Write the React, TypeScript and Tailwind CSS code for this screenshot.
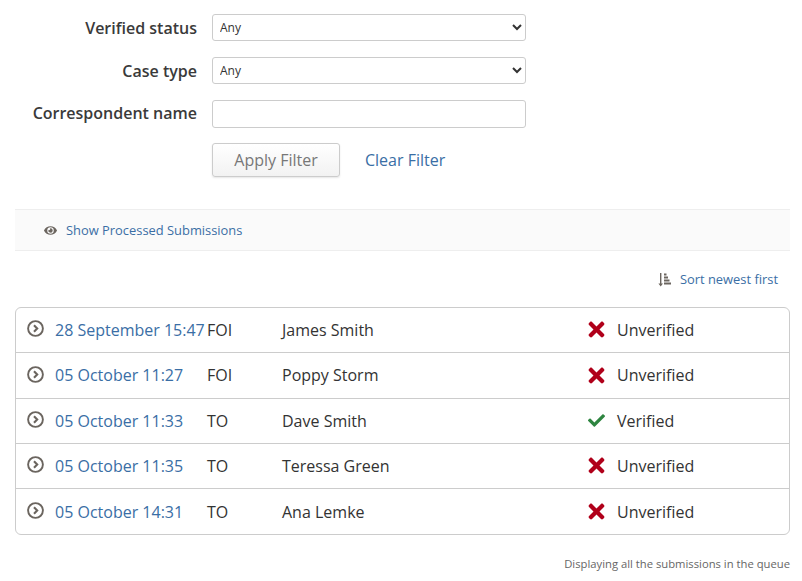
import React from "react";
import { FaEye, FaTimes, FaCheck } from "react-icons/fa";

const rows = [
  ["28 September 15:47", "FOI", "James Smith", false, "pb-[1px]"],
  ["05 October 11:27", "FOI", "Poppy Storm", false, "pb-[1px]"],
  ["05 October 11:33", "TO", "Dave Smith", true, ""],
  ["05 October 11:35", "TO", "Teressa Green", false, "pb-[1px]"],
  ["05 October 14:31", "TO", "Ana Lemke", false, "pt-[1px]"],
] as const;

function Chevron() {
  return (
    <svg width="17" height="17" viewBox="0 0 17 17" fill="none" stroke="#6b655f" className="shrink-0">
      <circle cx="8.5" cy="8.5" r="7.4" strokeWidth="1.9" />
      <path d="M7 5.2 L10.2 8.5 L7 11.8" strokeWidth="2.1" />
    </svg>
  );
}

function SortIcon() {
  return (
    <svg width="13" height="14" viewBox="0 0 13 14" fill="#6b655f" className="shrink-0">
      <path d="M2 0h1.4v10.5H5L2.7 13.5 0.4 10.5H2z" />
      <rect x="6" y="0.5" width="2.5" height="2" />
      <rect x="6" y="3.5" width="4" height="2" />
      <rect x="6" y="6.5" width="5.5" height="2" />
      <rect x="6" y="9.5" width="7" height="2" />
    </svg>
  );
}

function Field({ label, children, className, labelClass = "" }: { label: string; children: React.ReactNode; className: string; labelClass?: string }) {
  return (
    <div className={`flex items-center ${className}`}>
      <label className={`w-[197px] text-right text-base font-semibold text-[#3a3a3a] ${labelClass}`}>{label}</label>
      <div className="ml-[15px] w-[314px]">{children}</div>
    </div>
  );
}

const selectCls =
  "block h-[27px] w-full rounded-[3px] border border-[#cccccc] bg-white pl-[3px] text-xs text-[#333333] [font-family:'Open_Sans',sans-serif]";

export default function App() {
  return (
    <div className="h-[581px] w-[802px] overflow-hidden bg-white text-base text-[#333333] [font-family:'Open_Sans',sans-serif]">
      <div className="pt-[14px]">
        <Field label="Verified status" className="h-[27px]">
          <select className={selectCls}><option>Any</option></select>
        </Field>
        <Field label="Case type" className="mt-[16px] h-[27px]">
          <select className={selectCls}><option>Any</option></select>
        </Field>
        <Field label="Correspondent name" className="mt-[16px] h-[28px]" labelClass="pb-[2px]">
          <input className="block h-[28px] w-full rounded-[3px] border border-[#cccccc] bg-white" />
        </Field>
        <div className="ml-[212px] mt-[15px] flex items-center">
          <button className="h-[34px] w-[128px] rounded-[3px] border border-[#cccccc] bg-gradient-to-b from-white to-[#f2f2f2] text-base text-[#777777] shadow-[0_1px_2px_rgba(0,0,0,0.1)]">
            Apply Filter
          </button>
          <a className="ml-[25px] text-base text-[#3a6ea5]">Clear Filter</a>
        </div>
      </div>

      <div className="ml-[15px] mr-[12px] mt-[32px] flex h-[42px] items-center border-y border-[#eeeeee] bg-[#fafafa] pl-[29px]">
        <FaEye className="text-[13px] text-[#6b655f]" />
        <a className="ml-[9px] pt-[1px] text-[12.9px] text-[#3a6ea5]">Show Processed Submissions</a>
      </div>

      <div className="mr-[24px] mt-[20px] flex h-[17px] items-center justify-end">
        <SortIcon />
        <a className="ml-[9px] text-[12.9px] text-[#3a6ea5]">Sort newest first</a>
      </div>

      <div className="ml-[15px] mr-[12px] mt-[19px] rounded-[6px] border border-[#cccccc] pb-[0.6px]">
        {rows.map(([date, type, name, ok, pad], i) => (
          <div key={i} className={`flex items-center ${pad} ${i ? "h-[45.25px] border-t border-[#cccccc]" : "h-[44.4px]"}`}>
            <div className="ml-[11px] -mt-[2px]"><Chevron /></div>
            <a className="ml-[11px] w-[152px] whitespace-nowrap text-[#3a6ea5]">{date}</a>
            <span className="w-[75px]">{type}</span>
            <span className="w-[306px]">{name}</span>
            {ok ? (
              <FaCheck className="w-[17px] text-[17px] text-[#2e8540]" />
            ) : (
              <FaTimes className="h-[23px] w-[17px] text-[#b0001a]" />
            )}
            <span className="ml-[12px]">{ok ? "Verified" : "Unverified"}</span>
          </div>
        ))}
      </div>

      <div className="mr-[12px] mt-[21px] text-right text-[11.25px] text-[#666666]">
        Displaying all the submissions in the queue
      </div>
    </div>
  );
}
